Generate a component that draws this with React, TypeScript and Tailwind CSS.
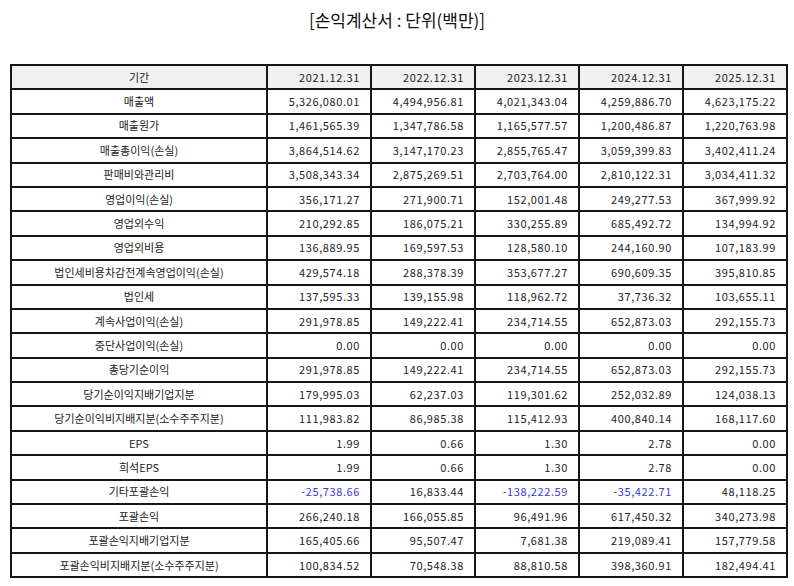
const periods = ["2021.12.31", "2022.12.31", "2023.12.31", "2024.12.31", "2025.12.31"];

const rows: [string, string[]][] = [
  ["매출액", ["5,326,080.01", "4,494,956.81", "4,021,343.04", "4,259,886.70", "4,623,175.22"]],
  ["매출원가", ["1,461,565.39", "1,347,786.58", "1,165,577.57", "1,200,486.87", "1,220,763.98"]],
  ["매출총이익(손실)", ["3,864,514.62", "3,147,170.23", "2,855,765.47", "3,059,399.83", "3,402,411.24"]],
  ["판매비와관리비", ["3,508,343.34", "2,875,269.51", "2,703,764.00", "2,810,122.31", "3,034,411.32"]],
  ["영업이익(손실)", ["356,171.27", "271,900.71", "152,001.48", "249,277.53", "367,999.92"]],
  ["영업외수익", ["210,292.85", "186,075.21", "330,255.89", "685,492.72", "134,994.92"]],
  ["영업외비용", ["136,889.95", "169,597.53", "128,580.10", "244,160.90", "107,183.99"]],
  ["법인세비용차감전계속영업이익(손실)", ["429,574.18", "288,378.39", "353,677.27", "690,609.35", "395,810.85"]],
  ["법인세", ["137,595.33", "139,155.98", "118,962.72", "37,736.32", "103,655.11"]],
  ["계속사업이익(손실)", ["291,978.85", "149,222.41", "234,714.55", "652,873.03", "292,155.73"]],
  ["중단사업이익(손실)", ["0.00", "0.00", "0.00", "0.00", "0.00"]],
  ["총당기순이익", ["291,978.85", "149,222.41", "234,714.55", "652,873.03", "292,155.73"]],
  ["당기순이익지배기업지분", ["179,995.03", "62,237.03", "119,301.62", "252,032.89", "124,038.13"]],
  ["당기순이익비지배지분(소수주주지분)", ["111,983.82", "86,985.38", "115,412.93", "400,840.14", "168,117.60"]],
  ["EPS", ["1.99", "0.66", "1.30", "2.78", "0.00"]],
  ["희석EPS", ["1.99", "0.66", "1.30", "2.78", "0.00"]],
  ["기타포괄손익", ["-25,738.66", "16,833.44", "-138,222.59", "-35,422.71", "48,118.25"]],
  ["포괄손익", ["266,240.18", "166,055.85", "96,491.96", "617,450.32", "340,273.98"]],
  ["포괄손익지배기업지분", ["165,405.66", "95,507.47", "7,681.38", "219,089.41", "157,779.58"]],
  ["포괄손익비지배지분(소수주주지분)", ["100,834.52", "70,548.38", "88,810.58", "398,360.91", "182,494.41"]],
];

const cell = "border-2 border-[#161616] py-0 h-[24.4px]";

export default function App() {
  return (
    <div
      className="w-[794px] h-[586px] bg-white text-[#222]"
      style={{ fontFamily: '"Noto Sans CJK KR", "Liberation Sans", sans-serif' }}
    >
      <div className="flex h-[38px] items-center justify-center pt-[2px] text-[17px] text-[#111]">
        [손익계산서 : 단위(백만)]
      </div>
      <div className="px-[10px] pt-[26px]">
        <table className="w-[776px] table-fixed border-collapse text-[11px] leading-none">
          <colgroup>
            <col className="w-[256px]" />
            <col className="w-[104px]" />
            <col className="w-[104px]" />
            <col className="w-[104px]" />
            <col className="w-[104px]" />
            <col className="w-[104px]" />
          </colgroup>
          <thead>
            <tr className="bg-[#f0f0f0]">
              <th className={`${cell} px-[10px] text-center font-normal`}>기간</th>
              {periods.map((p) => (
                <th key={p} className={`${cell} pl-[6px] pr-[10px] text-right font-normal tracking-[0.6px]`}>
                  {p}
                </th>
              ))}
            </tr>
          </thead>
          <tbody>
            {rows.map(([label, values]) => (
              <tr key={label}>
                <td className={`${cell} px-[10px] text-center`}>{label}</td>
                {values.map((v, i) => (
                  <td
                    key={i}
                    className={`${cell} pl-[6px] pr-[10px] text-right tracking-[0.6px] ${v.startsWith("-") ? "text-[#3b3bd0]" : ""}`}
                  >
                    {v}
                  </td>
                ))}
              </tr>
            ))}
          </tbody>
        </table>
      </div>
    </div>
  );
}
